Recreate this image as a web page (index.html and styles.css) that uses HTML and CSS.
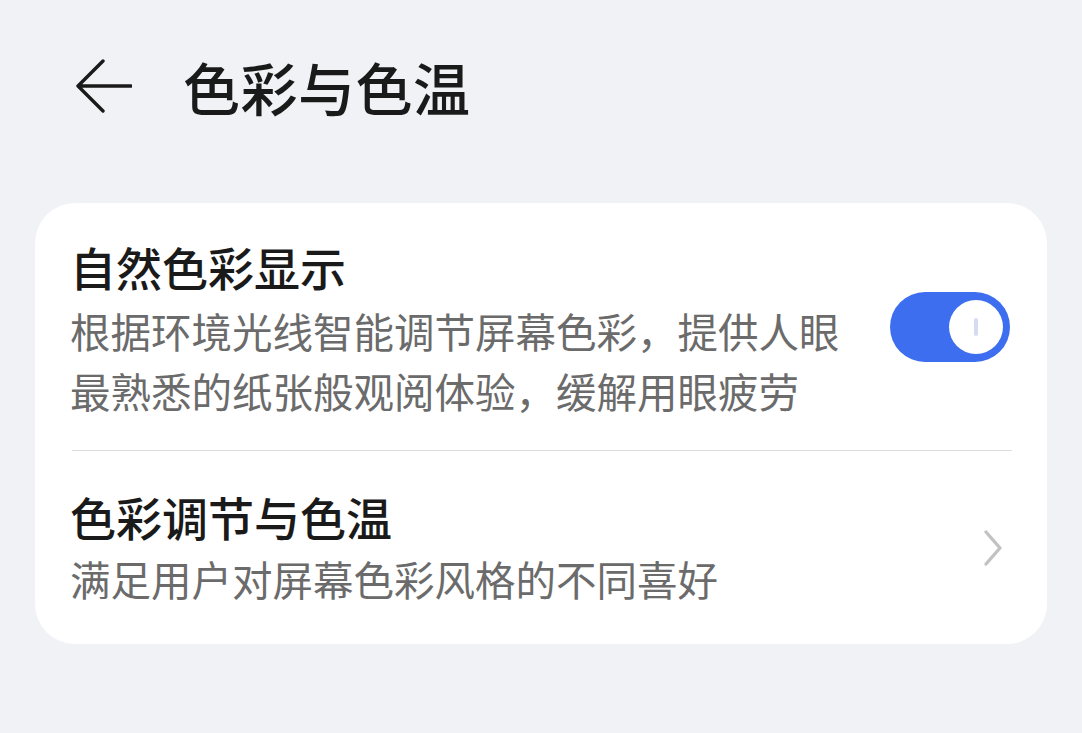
FILE: index.html
```html
<!DOCTYPE html>
<html>
<head>
    <title>色彩与色温</title>
    <link rel="stylesheet" href="styles.css">
</head>
<body>
    <div class="page">

        <div class="header">
            <svg class="back" width="56" height="54" viewBox="0 0 56 54">
                <path d="M27 2 L2 27 L27 52 M2 27 L55 27" fill="none" stroke="#1a1a1a" stroke-width="3.4" stroke-linecap="round" stroke-linejoin="round"/>
            </svg>
            <h1 class="title">色彩与色温</h1>
        </div>

        <div class="card">
            <div class="row row-first">
                <div class="rowText">
                    <div class="rowTitle">自然色彩显示</div>
                    <div class="rowSub">根据环境光线智能调节屏幕色彩，提供人眼<br>最熟悉的纸张般观阅体验，缓解用眼疲劳</div>
                </div>
                <div class="toggle">
                    <div class="knob"><span class="mark"></span></div>
                </div>
            </div>

            <div class="divider"></div>

            <div class="row row-last">
                <div class="rowText">
                    <div class="rowTitle">色彩调节与色温</div>
                    <div class="rowSub">满足用户对屏幕色彩风格的不同喜好</div>
                </div>
                <svg class="chevron" width="20" height="38" viewBox="0 0 20 38">
                    <path d="M3 3 L17 19 L3 35" fill="none" stroke="#c2c2c2" stroke-width="3.4" stroke-linecap="round" stroke-linejoin="round"/>
                </svg>
            </div>
        </div>

    </div>
</body>
</html>
```

FILE: styles.css
```css
body{
    margin: 0;
    background-color: #f1f2f6;
    font-family: "Noto Sans CJK SC", "Noto Sans", sans-serif;
    color: #1a1a1a;
}

.page{
    width: 1082px;
    height: 733px;
    padding: 0 35px;
    box-sizing: border-box;
}

.header{
    display: flex;
    align-items: center;
    height: 174px;
    padding-left: 41px;
    padding-bottom: 2px;
    box-sizing: border-box;
}

.back{
    margin-right: 51px;
}

.title{
    margin: 0;
    font-size: 57px;
    font-weight: 500;
    line-height: 60px;
    letter-spacing: 0.5px;
}

.card{
    margin-top: 29px;
    background-color: white;
    border-radius: 40px;
    padding: 0 35px 0 35px;
}

.row{
    display: flex;
    align-items: center;
    justify-content: space-between;
}

.row-first{
    padding-top: 33px;
    padding-bottom: 29px;
}

.row-last{
    padding-top: 35px;
    padding-bottom: 35px;
}

.rowTitle{
    font-size: 46px;
    font-weight: 500;
    line-height: 60px;
}

.rowSub{
    margin-top: 5px;
    font-size: 40.5px;
    line-height: 60px;
    color: #6b6b6b;
}

.row-last .rowSub{
    margin-top: 3px;
}

.divider{
    height: 1px;
    margin-left: 2px;
    background-color: #dcdcdc;
}

.toggle{
    width: 120px;
    height: 70px;
    border-radius: 35px;
    background-color: #3d6ef0;
    display: flex;
    align-items: center;
    justify-content: flex-end;
    padding-right: 7px;
    box-sizing: border-box;
    margin-top: -3px;
    margin-right: 2px;
}

.knob{
    width: 54px;
    height: 54px;
    border-radius: 50%;
    background-color: white;
    display: flex;
    align-items: center;
    justify-content: center;
}

.mark{
    width: 4px;
    height: 18px;
    border-radius: 2px;
    background-color: #d3dcf2;
}

.chevron{
    margin-right: 9px;
}
```
